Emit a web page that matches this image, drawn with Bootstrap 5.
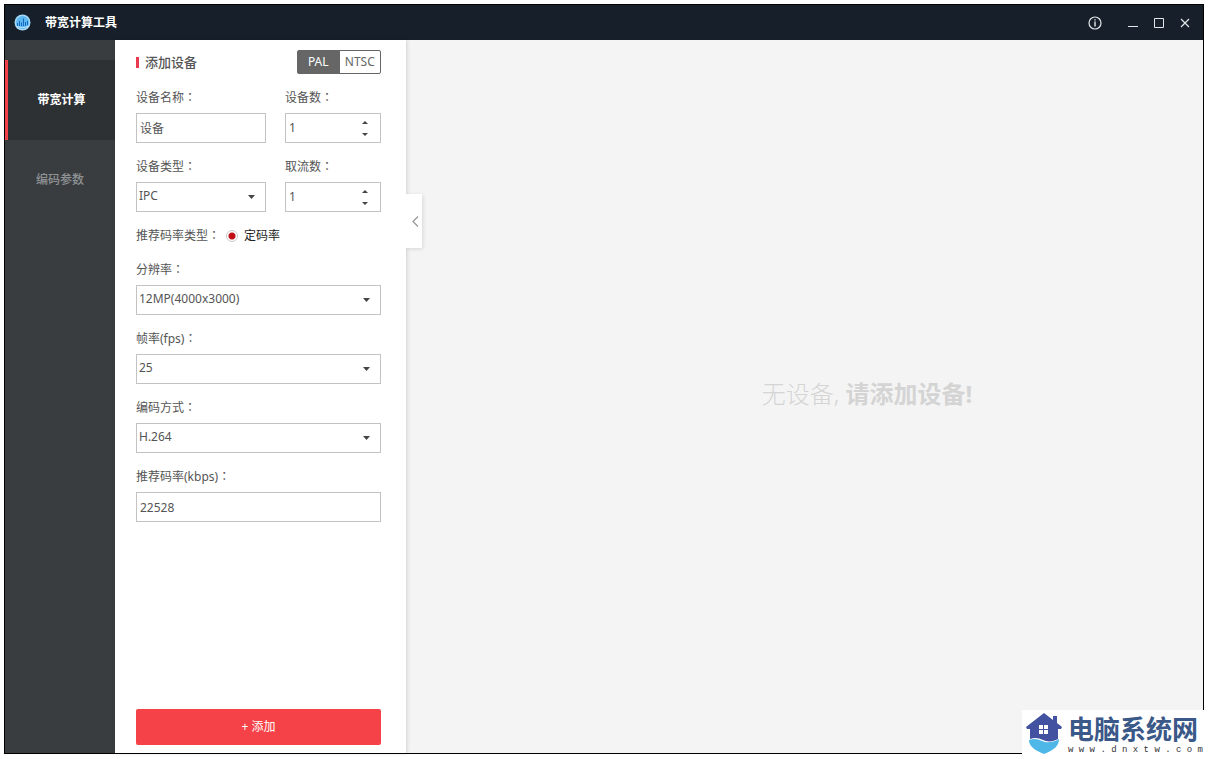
<!DOCTYPE html>
<html lang="zh-CN">
<head>
<meta charset="utf-8">
<meta name="viewport" content="width=device-width, initial-scale=1">
<title>带宽计算工具</title>
<link href="https://cdn.jsdelivr.net/npm/bootstrap@5.3.0/dist/css/bootstrap.min.css" rel="stylesheet">
<style>
  body { font-family: "Noto Sans", "Noto Sans CJK SC", sans-serif; font-size: 12px; line-height: 20px; color: #555; background: #fff; padding: 4px 5px 5px 4px; }
  .app-window { border: 1px solid #000; background: #f4f4f4; }
  .title-bar { height: 35px; background: #17202a; color: #fff; padding: 0 5px 0 9px; }
  .title-bar strong { margin-left: 14px; }
  .title-bar button { border: 0; background: none; padding: 0; width: 26px; height: 26px; color: #e4e7e9; display: flex; align-items: center; justify-content: center; }
  .side-nav { width: 110px; background: #3a3d40; padding-top: 20px; }
  .side-nav a { height: 80px; color: #909395; font-weight: 500; text-decoration: none; }
  .side-nav a.active { background: #2e3133; border-left: 3px solid #f0414b; color: #fff; font-weight: 700; }
  .device-panel { width: 291px; background: #fff; padding: 10px 25px 8px 21px; box-shadow: 1px 0 4px rgba(0,0,0,.15); z-index: 1; }
  .panel-head { margin-bottom: 13px; height: 24px; }
  .panel-head h1 { font-size: 13px; font-weight: 500; line-height: 20px; color: #555; }
  .panel-head h1::before { content: ""; width: 3px; height: 11px; background: #ea3a4d; margin-right: 6px; }
  .std-switch { width: 84px; }
  .std-switch label { width: 42px; height: 24px; padding: 0; font-size: 12px; line-height: 22px; border: 1px solid #666; border-radius: 2px; color: #666; }
  .std-switch .btn-check:checked + label { background: #666; border-color: #666; color: #fff; }
  .field-grid { display: grid; grid-template-columns: 130fr 96fr; column-gap: 19px; row-gap: 13px; }
  .field-wide { grid-column: 1 / -1; }
  .field-name { display: block; height: 20px; margin-bottom: 6px; white-space: nowrap; }
  .colon { font-family: "Noto Sans CJK TC", sans-serif; }
  .field-box { height: 30px; min-height: 30px; border: 1px solid #c3c3c3; border-radius: 0; padding: 0 3px; font-size: 12px; line-height: 20px; color: #555; background-color: #fff; }
  select.field-box { padding: 0 24px 2px 2px; background-position: right 10px center; background-size: 7px 4px;
    background-image: url("data:image/svg+xml,%3Csvg xmlns='http://www.w3.org/2000/svg' viewBox='0 0 7 4'%3E%3Cpath fill='%23444' d='M0 0h7L3.500 4z'/%3E%3C/svg%3E"); }
  .spin-box input { border: 0; outline: 0; padding: 0; min-width: 0; width: 60px; color: #555; appearance: textfield; -moz-appearance: textfield; }
  .spin-box input::-webkit-inner-spin-button { -webkit-appearance: none; margin: 0; }
  .spin-box button { border: 0; background: none; padding: 0; width: 24px; height: 12px; display: flex; align-items: center; justify-content: center; }
  .rate-row { height: 21px; }
  .rate-row input { width: 12px; height: 12px; margin: 0 6px; appearance: none; border: 1px solid #c9c9c9; border-radius: 50%; background: radial-gradient(circle, #c00d16 0 3px, #fff 4px); }
  .rate-row label { color: #222; }
  .btn-add { height: 36px; background: #f54248; border: 0; border-radius: 2px; color: #fff; font-size: 12px; line-height: 20px; padding: 0; }
  .btn-add:hover { background: #e0363c; color: #fff; }
  .fold-tab { top: 154px; left: 100%; width: 16px; height: 54px; border: 0; background: #fff; padding: 0 0 0 3px; box-shadow: 1px 1px 4px rgba(0,0,0,.12); clip-path: inset(-6px -6px -6px 0); }
  .empty-area { padding: 0 0 6px 125px; }
  .empty-area p { font-size: 24px; line-height: 36px; font-weight: 300; color: #d4d4d4; }
  .empty-area strong { font-weight: 700; }
  .site-stamp { right: 5px; bottom: 4px; width: 182px; height: 45px; background: #fff; z-index: 2; padding: 2px 0 0 4px; }
  .stamp-name { font-size: 26px; line-height: 34px; font-weight: 700; color: #3a5888; }
  .stamp-text { margin-left: 6px; }
  .stamp-url { font: 9px/9px "Liberation Mono", monospace; color: #333; white-space: nowrap; }
</style>
</head>
<body class="min-vh-100 d-flex flex-column">
<div class="app-window flex-grow-1 d-flex flex-column">
  <header class="title-bar d-flex align-items-center flex-shrink-0">
    <svg width="17" height="17" viewBox="0 0 17 17" aria-hidden="true">
      <circle cx="8.500" cy="8.500" r="8" fill="#a5d8f5"/><circle cx="8.500" cy="8.500" r="6.500" fill="#5db8f2"/>
      <path d="M3.500 9v3M5.500 7v5M7.500 8.500v3.500M9.500 4.500v7.500M11.500 8v4M13.500 7v4" stroke="#1668c4" stroke-width="1"/>
      <path d="M2.500 12.500q6 2.500 12 0" fill="none" stroke="#bfe4fa" stroke-width="1"/>
    </svg>
    <strong class="me-auto">带宽计算工具</strong>
    <button type="button" class="me-2" aria-label="关于"><svg width="14" height="14" viewBox="0 0 14 14"><circle cx="7" cy="7" r="6" fill="none" stroke="currentColor" stroke-width="1.200"/><path d="M6.300 3.200h1.400v1.400H6.300zM6.300 5.600h1.400v5H6.300z" fill="currentColor"/></svg></button>
    <div class="d-flex ms-1">
      <button type="button" aria-label="最小化"><svg width="10" height="11" viewBox="0 0 10 11"><path d="M0 9.500h10" stroke="currentColor"/></svg></button>
      <button type="button" aria-label="最大化"><svg width="10" height="10" viewBox="0 0 10 10"><path d="M.5.5h9v9h-9z" fill="none" stroke="currentColor"/></svg></button>
      <button type="button" aria-label="关闭"><svg width="10" height="10" viewBox="0 0 10 10"><path d="M1 1l8 8M9 1l-8 8" stroke="currentColor" stroke-width="1.200"/></svg></button>
    </div>
  </header>
  <div class="flex-grow-1 d-flex">
    <nav class="side-nav flex-shrink-0">
      <a href="#" class="active d-flex align-items-center justify-content-center" aria-current="page">带宽计算</a>
      <a href="#" class="d-flex align-items-center justify-content-center">编码参数</a>
    </nav>
    <section class="device-panel flex-shrink-0 position-relative d-flex flex-column">
      <div class="panel-head d-flex align-items-center justify-content-between">
        <h1 class="m-0 d-flex align-items-center">添加设备</h1>
        <div class="btn-group std-switch" role="group" aria-label="制式">
          <input class="btn-check" type="radio" name="std" id="pal" checked><label class="btn" for="pal">PAL</label>
          <input class="btn-check" type="radio" name="std" id="ntsc"><label class="btn" for="ntsc">NTSC</label>
        </div>
      </div>
      <form class="flex-grow-1 d-flex flex-column justify-content-between">
        <div class="field-grid">
          <div>
            <label class="field-name" for="devName">设备名称<span class="colon" lang="zh-TW">：</span></label>
            <input class="form-control field-box" id="devName" type="text" value="设备">
          </div>
          <div>
            <label class="field-name" for="devCount">设备数<span class="colon" lang="zh-TW">：</span></label>
            <div class="field-box spin-box d-flex align-items-center justify-content-between">
              <input id="devCount" type="number" value="1" min="1">
              <div>
                <button type="button" aria-label="增加设备数"><svg width="6" height="3" viewBox="0 0 6 3"><path d="M0 3h6L3 0z" fill="#444"/></svg></button>
                <button type="button" aria-label="减少设备数"><svg width="6" height="3" viewBox="0 0 6 3"><path d="M0 0h6L3 3z" fill="#444"/></svg></button>
              </div>
            </div>
          </div>
          <div>
            <label class="field-name" for="devType">设备类型<span class="colon" lang="zh-TW">：</span></label>
            <select class="form-select field-box" id="devType"><option>IPC</option></select>
          </div>
          <div>
            <label class="field-name" for="streamCount">取流数<span class="colon" lang="zh-TW">：</span></label>
            <div class="field-box spin-box d-flex align-items-center justify-content-between">
              <input id="streamCount" type="number" value="1" min="1">
              <div>
                <button type="button" aria-label="增加取流数"><svg width="6" height="3" viewBox="0 0 6 3"><path d="M0 3h6L3 0z" fill="#444"/></svg></button>
                <button type="button" aria-label="减少取流数"><svg width="6" height="3" viewBox="0 0 6 3"><path d="M0 0h6L3 3z" fill="#444"/></svg></button>
              </div>
            </div>
          </div>
          <div class="field-wide rate-row d-flex align-items-center">
            <span>推荐码率类型<span class="colon" lang="zh-TW">：</span></span>
            <input type="radio" name="rate" id="cbr" checked><label for="cbr">定码率</label>
          </div>
          <div class="field-wide">
            <label class="field-name" for="resolution">分辨率<span class="colon" lang="zh-TW">：</span></label>
            <select class="form-select field-box" id="resolution"><option>12MP(4000x3000)</option></select>
          </div>
          <div class="field-wide">
            <label class="field-name" for="fps">帧率(fps)<span class="colon" lang="zh-TW">：</span></label>
            <select class="form-select field-box" id="fps"><option>25</option></select>
          </div>
          <div class="field-wide">
            <label class="field-name" for="codec">编码方式<span class="colon" lang="zh-TW">：</span></label>
            <select class="form-select field-box" id="codec"><option>H.264</option></select>
          </div>
          <div class="field-wide">
            <label class="field-name" for="kbps">推荐码率(kbps)<span class="colon" lang="zh-TW">：</span></label>
            <input class="form-control field-box" id="kbps" type="text" value="22528">
          </div>
        </div>
        <button type="button" class="btn btn-add w-100">+ 添加</button>
      </form>
      <button type="button" class="fold-tab position-absolute d-flex align-items-center justify-content-center" aria-label="收起面板"><svg width="7" height="11" viewBox="0 0 7 11"><path d="M6 .5l-5 5 5 5" fill="none" stroke="#999" stroke-width="1.300"/></svg></button>
    </section>
    <main class="empty-area flex-grow-1 d-flex align-items-center justify-content-center">
      <p class="m-0">无设备, <strong>请添加设备!</strong></p>
    </main>
  </div>
</div>
<aside class="site-stamp position-absolute d-flex">
  <svg class="flex-shrink-0" width="36" height="42" viewBox="0 0 36 42" aria-hidden="true">
    <path d="M18 1L0 15l1 2h3v10c5-2 9-1 13 1s10 2 15-1V17h3l1-2-5-4V4h-4v4z" fill="#4352a0"/>
    <path d="M13 13h4v4h-4zM18 13h4v4h-4zM13 18h4v4h-4zM18 18h4v4h-4z" fill="#fff"/>
    <path d="M3 28c5-2 9-1 13 1s11 2 17-2c0 7-5 11-15 15C8 38 3 34 3 28z" fill="#4eb7e8"/>
  </svg>
  <div class="stamp-text">
    <div class="stamp-name">电脑系统网</div>
    <div class="stamp-url">w w w . d n x t w . c o m</div>
  </div>
</aside>
<script src="https://cdn.jsdelivr.net/npm/bootstrap@5.3.0/dist/js/bootstrap.bundle.min.js"></script>
</body>
</html>
